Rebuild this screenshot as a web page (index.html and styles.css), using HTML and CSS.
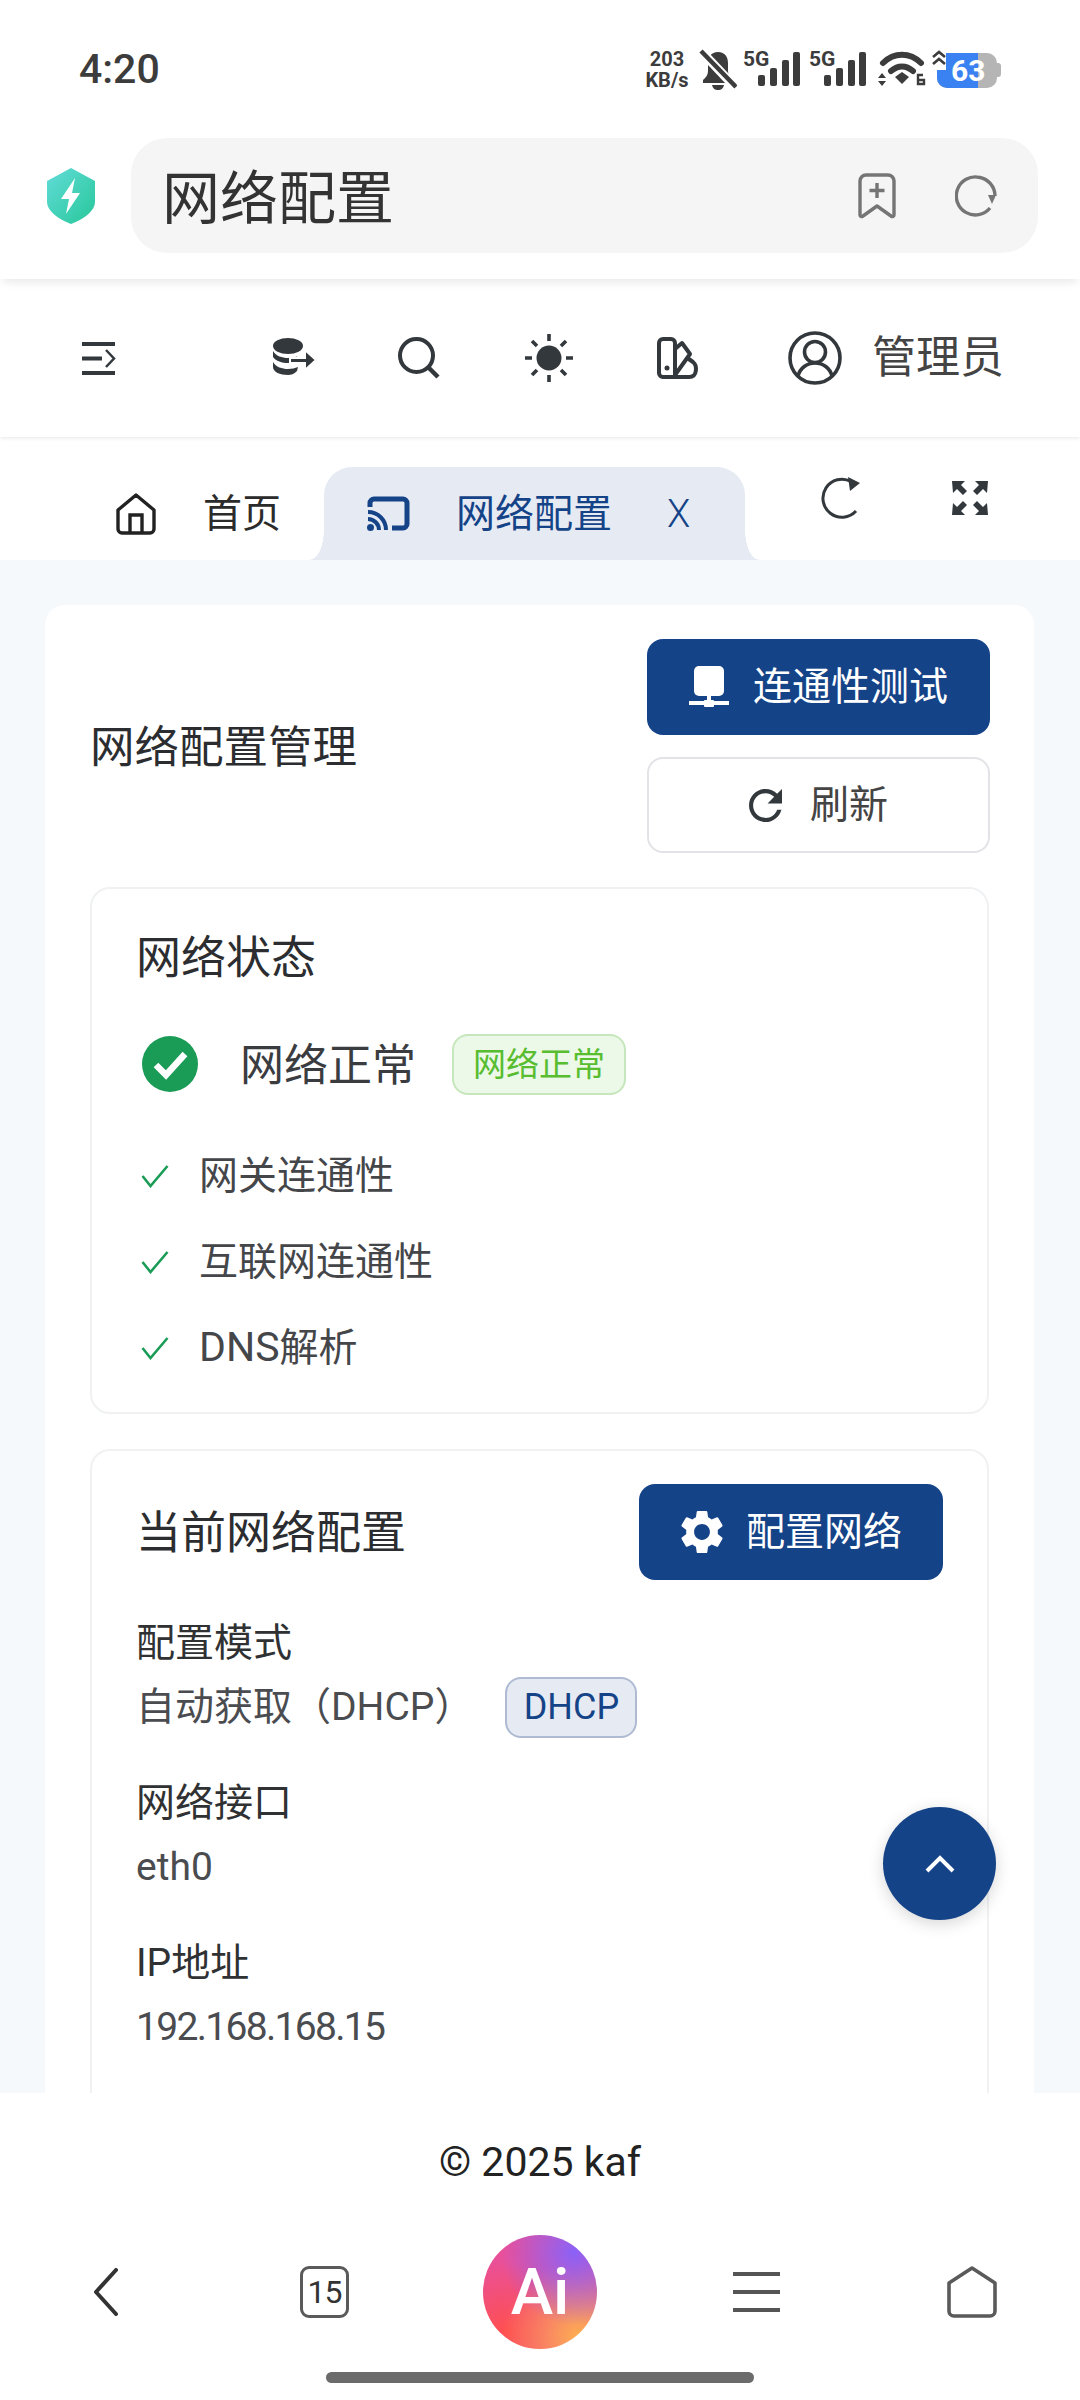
FILE: index.html
```html
<!DOCTYPE html>
<html lang="zh-CN">
<head>
    <meta charset="UTF-8">
    <title>网络配置</title>
    <link rel="stylesheet" href="styles.css">
</head>
<body>
<div class="screen">

    <!-- Phone status bar -->
    <div class="statusbar">
        <span class="clock">4:20</span>
        <div class="status-icons">
            <div class="speed"><span>203</span><span>KB/s</span></div>
            <svg class="ic-bell" viewBox="0 0 38 42"><path fill="#3c3c3c" d="M19 3c-7 0-10 5-10 11v8c0 4-2 6-5 9v3h30v-3c-3-3-5-5-5-9v-8c0-6-3-11-10-11z"/><path fill="#3c3c3c" d="M13 36h12c-1 4-3 5-6 5s-5-1-6-5z"/><path d="M1 1l36 38" stroke="#fff" stroke-width="9"/><path d="M2 2l35 36" stroke="#3c3c3c" stroke-width="4.5"/></svg>
            <div class="signal">
                <span class="sig-label">5G</span>
                <svg viewBox="0 0 42 34"><rect x="0" y="23" width="7" height="11" rx="2"/><rect x="12" y="16" width="7" height="18" rx="2"/><rect x="24" y="8" width="7" height="26" rx="2"/><rect x="35" y="0" width="7" height="34" rx="2"/></svg>
            </div>
            <div class="signal signal-next">
                <span class="sig-label">5G</span>
                <svg viewBox="0 0 42 34"><rect x="0" y="23" width="7" height="11" rx="2"/><rect x="12" y="16" width="7" height="18" rx="2"/><rect x="24" y="8" width="7" height="26" rx="2"/><rect x="35" y="0" width="7" height="34" rx="2"/></svg>
            </div>
            <svg class="ic-wifi" viewBox="0 0 48 36"><path d="M5 12C16 1 32 1 43 12" fill="none" stroke="#3c3c3c" stroke-width="6" stroke-linecap="round"/><path d="M13 20c7-6 15-6 22 0" fill="none" stroke="#3c3c3c" stroke-width="6" stroke-linecap="round"/><path d="M17 26l7-5 7 5-7 7z" fill="#3c3c3c"/><path d="M0 27l4-5 4 5zM0 30l4 5 4-5z" fill="#3c3c3c"/><path d="M45 24h-5v9h6v-4h-6" fill="none" stroke="#3c3c3c" stroke-width="2.4"/></svg>
            <div class="battery">
                <svg class="ic-charge" viewBox="0 0 14 20"><path d="M1 7l6-5 6 5M1 14l6-5 6 5" fill="none" stroke="#3c3c3c" stroke-width="2.6"/></svg>
                <div class="batt-body"><div class="batt-fill"></div><span class="batt-num">63</span></div>
                <div class="batt-tip"></div>
            </div>
        </div>
    </div>

    <!-- Browser address bar -->
    <div class="addressbar">
        <svg class="ic-shield" viewBox="0 0 48 56">
            <defs><linearGradient id="shieldGrad" x1="0" y1="0" x2="1" y2="1"><stop offset="0" stop-color="#62dcd8"/><stop offset="1" stop-color="#27c79a"/></linearGradient></defs>
            <path d="M24 0l24 13v21c0 9-11 17-24 22C11 51 0 43 0 34V13z" fill="url(#shieldGrad)"/>
            <path d="M28 10L14 31h8l-3 15 14-21h-8z" fill="#fff"/>
        </svg>
        <div class="urlbox">
            <span class="urltext">网络配置</span>
            <svg class="ic-bookmark" viewBox="0 0 40 46"><path d="M3 8a6 6 0 0 1 6-6h22a6 6 0 0 1 6 6v34c0 2-2 2-3 1l-14-10-14 10c-1 1-3 1-3-1z" fill="none" stroke="#757575" stroke-width="3.4" stroke-linejoin="round"/><path d="M20 10v15M12.500 17.500h15" stroke="#757575" stroke-width="3.4"/></svg>
            <svg class="ic-reload" viewBox="0 0 42 42"><path d="M35 33A19 19 0 1 1 24 2.300 19 19 0 0 1 40 21" fill="none" stroke="#757575" stroke-width="3.4"/><path d="M33 20h8l-4 9z" fill="#757575"/></svg>
        </div>
    </div>

    <!-- App header -->
    <header class="topbar">
        <svg class="ic-menu" viewBox="0 0 35 35"><path d="M1 3h33M1 17.500h20M1 32h33" stroke="#33383d" stroke-width="4" fill="none"/><path d="M25 9l8 8.500-8 8.500" stroke="#33383d" stroke-width="2.500" fill="none"/></svg>
        <svg class="ic-db" viewBox="0 0 44 40"><ellipse cx="16" cy="8" rx="15" ry="8" fill="#33383d"/><path d="M1 13c3 5 9 7 15 7 3 0 6-.5 9-1.500v5c-3 1-6 1.500-9 1.500-6 0-12-2-15-6zM1 24c3 5 9 7 15 7 4 0 7-1 10-2l-1 4c-3 3-6 4-9 4-8 0-15-3-15-8z" fill="#33383d"/><path d="M18 20h15v-8l11 10-11 10v-7H18z" fill="#33383d" stroke="#fff" stroke-width="2"/></svg>
        <svg class="ic-search" viewBox="0 0 42 42"><circle cx="18.500" cy="18.500" r="16.500" fill="none" stroke="#33383d" stroke-width="4"/><path d="M30 30l10 10" stroke="#33383d" stroke-width="4.500"/></svg>
        <svg class="ic-sun" viewBox="0 0 48 48"><circle cx="24" cy="24" r="12.500" fill="#33383d"/><path d="M24 0v7M24 41v7M0 24h7M41 24h7M7 7l5 5M36 36l5 5M7 41l5-5M36 12l5-5" stroke="#33383d" stroke-width="3.600"/></svg>
        <svg class="ic-palette" viewBox="0 0 44 42"><path d="M3 6a4 4 0 0 1 4-4h8a4 4 0 0 1 4 4v34H7a4 4 0 0 1-4-4z" fill="none" stroke="#33383d" stroke-width="4"/><path d="M19 12l7-6 8 11-15 21" fill="none" stroke="#33383d" stroke-width="4" stroke-linejoin="round"/><path d="M30 20l7 5c4 3 5 15-4 15H14" fill="none" stroke="#33383d" stroke-width="4" stroke-linejoin="round"/><circle cx="11" cy="31" r="2.500" fill="#33383d"/></svg>
        <svg class="ic-user" viewBox="0 0 54 54"><circle cx="27" cy="27" r="25" fill="none" stroke="#33383d" stroke-width="3.600"/><circle cx="27" cy="21" r="10.500" fill="none" stroke="#33383d" stroke-width="3.600"/><path d="M10 45c2-8 9-13 17-13s15 5 17 13" fill="none" stroke="#33383d" stroke-width="3.600"/></svg>
        <span class="username">管理员</span>
    </header>

    <!-- Tabs -->
    <nav class="tabbar">
        <div class="tab">
            <svg class="ic-home" viewBox="0 0 40 42"><path d="M2 17L20 2l18 15v19a4 4 0 0 1-4 4H6a4 4 0 0 1-4-4z" fill="none" stroke="#222" stroke-width="3.400" stroke-linejoin="round"/><path d="M14 40V22h12v18" fill="none" stroke="#222" stroke-width="3.400"/></svg>
            <span class="tab-label">首页</span>
        </div>
        <div class="tab tab-active">
            <svg class="ic-cast" viewBox="0 0 43 35"><path d="M3 11V7a4 4 0 0 1 4-4h29a4 4 0 0 1 4 4v21a4 4 0 0 1-4 4H25" fill="none" stroke="#154388" stroke-width="5"/><path d="M1 16c10 0 18 8 18 18M1 23c6 0 11 5 11 11" fill="none" stroke="#154388" stroke-width="4"/><circle cx="3.500" cy="31.500" r="3.500" fill="#154388"/></svg>
            <span class="tab-label tab-label-active">网络配置</span>
            <span class="tab-close">X</span>
        </div>
        <svg class="ic-tabreload" viewBox="0 0 42 42"><path d="M35 34A19 19 0 1 1 30 4.500" fill="none" stroke="#33383d" stroke-width="3"/><path d="M27 0l12 6-10 8z" fill="#33383d"/></svg>
        <svg class="ic-fullscreen" viewBox="0 0 40 38"><path d="M2 2h13l-4 4 6 6-4 4-6-6-4 4zM38 2H25l4 4-6 6 4 4 6-6 4 4zM2 36h13l-4-4 6-6-4-4-6 6-4-4zM38 36H25l4-4-6-6 4-4 6 6 4-4z" fill="#33383d"/></svg>
    </nav>

    <!-- Page content -->
    <main class="content">
        <div class="page-card">
            <div class="page-head">
                <h1 class="page-title">网络配置管理</h1>
                <div class="page-actions">
                    <button class="btn btn-primary btn-wide">
                        <svg class="ic-wired" viewBox="0 0 40 42"><rect x="5" y="0" width="30" height="30" rx="5" fill="#fff"/><rect x="18" y="30" width="4" height="8" fill="#fff"/><rect x="0" y="35" width="40" height="4" fill="#fff"/><rect x="15" y="34" width="10" height="7" rx="1" fill="#fff"/></svg>
                        <span class="btn-text">连通性测试</span>
                    </button>
                    <button class="btn btn-plain btn-wide">
                        <svg class="ic-refresh" viewBox="4 4 16 16"><path fill="#33383d" d="M17.650 6.350C16.200 4.900 14.210 4 12 4c-4.420 0-7.990 3.580-7.990 8s3.570 8 7.990 8c3.730 0 6.840-2.550 7.730-6h-2.080c-.82 2.330-3.040 4-5.650 4-3.310 0-6-2.690-6-6s2.690-6 6-6c1.660 0 3.140.69 4.220 1.780L13 11h7V4l-2.350 2.350z"/></svg>
                        <span class="btn-text">刷新</span>
                    </button>
                </div>
            </div>

            <section class="panel panel-status">
                <h2 class="panel-title">网络状态</h2>
                <div class="status-row">
                    <svg class="ic-ok" viewBox="0 0 56 56"><circle cx="28" cy="28" r="28" fill="#1a9b56"/><path d="M14 29l10 10 19-21" fill="none" stroke="#fff" stroke-width="6.500"/></svg>
                    <span class="status-text">网络正常</span>
                    <span class="tag tag-green"><span class="tag-text">网络正常</span></span>
                </div>
                <ul class="check-list">
                    <li><svg class="ic-check" viewBox="0 0 28 24"><path d="M1.500 12l8 10L26.500 2" fill="none" stroke="#1a9b56" stroke-width="2.600"/></svg><span class="check-text">网关连通性</span></li>
                    <li><svg class="ic-check" viewBox="0 0 28 24"><path d="M1.500 12l8 10L26.500 2" fill="none" stroke="#1a9b56" stroke-width="2.600"/></svg><span class="check-text">互联网连通性</span></li>
                    <li><svg class="ic-check" viewBox="0 0 28 24"><path d="M1.500 12l8 10L26.500 2" fill="none" stroke="#1a9b56" stroke-width="2.600"/></svg><span class="check-text"><span class="latin dns">DNS</span>解析</span></li>
                </ul>
            </section>

            <section class="panel panel-config">
                <div class="panel-head">
                    <h2 class="panel-title">当前网络配置</h2>
                    <button class="btn btn-primary btn-config">
                        <svg class="ic-gear" viewBox="2 2 20 20"><path fill="#fff" d="M19.140 12.940c.04-.3.06-.61.06-.94 0-.32-.02-.64-.07-.94l2.030-1.580c.18-.14.23-.41.12-.61l-1.920-3.320c-.12-.22-.37-.29-.59-.22l-2.390.96c-.5-.38-1.030-.7-1.620-.94l-.36-2.540c-.04-.24-.24-.41-.48-.41h-3.840c-.24 0-.43.17-.47.41l-.36 2.540c-.59.24-1.130.57-1.620.94l-2.390-.96c-.22-.08-.47 0-.59.22L2.740 8.870c-.12.21-.08.47.12.61l2.030 1.580c-.05.3-.09.63-.09.94s.02.64.07.94l-2.030 1.580c-.18.14-.23.41-.12.61l1.920 3.320c.12.22.37.29.59.22l2.390-.96c.5.38 1.030.7 1.620.94l.36 2.540c.05.24.24.41.48.41h3.840c.24 0 .44-.17.47-.41l.36-2.540c.59-.24 1.130-.56 1.620-.94l2.390.96c.22.08.47 0 .59-.22l1.920-3.320c.12-.22.07-.47-.12-.61l-2.010-1.580zM12 15.600c-1.980 0-3.600-1.620-3.600-3.600s1.620-3.600 3.600-3.600 3.600 1.620 3.600 3.600-1.620 3.600-3.600 3.600z"/></svg>
                        <span class="btn-text">配置网络</span>
                    </button>
                </div>
                <div class="field">
                    <div class="field-label">配置模式</div>
                    <div class="field-value field-value-tag">
                        <span class="dhcp-text">自动获取（<span class="latin dhcp-latin">DHCP</span>）</span>
                        <span class="tag tag-blue latin">DHCP</span>
                    </div>
                </div>
                <div class="field">
                    <div class="field-label">网络接口</div>
                    <div class="field-value field-latin latin">eth0</div>
                </div>
                <div class="field">
                    <div class="field-label"><span class="latin">IP</span>地址</div>
                    <div class="field-value field-digits latin">192.168.168.15</div>
                </div>
            </section>
        </div>

        <button class="fab">
            <svg class="ic-up" viewBox="0 0 30 18"><path d="M2 16L15 3l13 13" fill="none" stroke="#fff" stroke-width="4"/></svg>
        </button>
    </main>

    <footer class="copyright"><span class="copyright-text">© 2025 kaf</span></footer>

    <!-- Browser bottom toolbar -->
    <div class="toolbar">
        <svg class="ic-back" viewBox="0 0 25 48"><path d="M23 2L3 24l20 22" fill="none" stroke="#333" stroke-width="4" stroke-linejoin="round" stroke-linecap="round"/></svg>
        <div class="tabcount"><span>15</span></div>
        <div class="ai-btn"><span>Ai</span></div>
        <svg class="ic-lines" viewBox="0 0 47 42"><path d="M0 3h47M0 21h47M0 39h47" stroke="#555" stroke-width="4"/></svg>
        <svg class="ic-homeoutline" viewBox="0 0 50 52"><path d="M25 2l23 15v28a5 5 0 0 1-5 5H7a5 5 0 0 1-5-5V17z" fill="none" stroke="#5a5a5a" stroke-width="3.600" stroke-linejoin="round"/></svg>
    </div>
    <div class="home-handle"></div>
</div>
</body>
</html>
```

FILE: styles.css
```css
/* Reset and base */
*, *::before, *::after {
    box-sizing: border-box;
    margin: 0;
    padding: 0;
}

html, body {
    width: 1080px;
    height: 2400px;
    background: #fff;
}

body {
    font-family: "Noto Sans CJK SC", "Noto Sans", sans-serif;
    color: #303133;
    overflow: hidden;
}

svg {
    display: block;
    flex: none;
}

.latin {
    font-family: Roboto, "Noto Sans CJK SC", sans-serif;
}

.screen {
    position: relative;
    width: 1080px;
    height: 2400px;
    display: flex;
    flex-direction: column;
}

/* Status bar */
.statusbar {
    height: 138px;
    padding: 45px 78px 0 79px;
    display: flex;
    justify-content: space-between;
    align-items: flex-start;
    color: #3c3c3c;
    font-family: Roboto, sans-serif;
}

.clock {
    font-size: 41px;
    font-weight: 500;
    line-height: 48px;
}

.status-icons {
    display: flex;
    align-items: flex-start;
    margin-top: 4px;
}

.speed {
    width: 48px;
    display: flex;
    flex-direction: column;
    align-items: center;
    font-size: 20px;
    font-weight: 700;
    line-height: 21px;
}

.ic-bell {
    width: 38px;
    height: 42px;
    margin-left: 8px;
}

.signal {
    position: relative;
    width: 57px;
    height: 40px;
    margin-left: 6px;
}

.signal-next {
    margin-left: 9px;
}

.signal svg {
    position: absolute;
    right: 0;
    top: 3px;
    width: 42px;
    height: 34px;
    fill: #3c3c3c;
}

.sig-label {
    position: absolute;
    left: 0;
    top: 0;
    font-size: 21px;
    font-weight: 700;
    line-height: 20px;
}

.ic-wifi {
    width: 48px;
    height: 36px;
    margin: 2px 0 0 12px;
}

.battery {
    position: relative;
    width: 70px;
    height: 36px;
    margin: 3px 0 0 6px;
    display: flex;
    align-items: center;
}

.ic-charge {
    position: absolute;
    left: 0;
    top: -2px;
    width: 14px;
    height: 20px;
    background: #fff;
    z-index: 1;
}

.batt-body {
    position: relative;
    margin-left: 5px;
    width: 60px;
    height: 35px;
    border-radius: 10px;
    background: #b5b5b5;
    overflow: hidden;
}

.batt-fill {
    width: 41px;
    height: 100%;
    background: #3a82f2;
}

.batt-num {
    position: absolute;
    left: 14px;
    top: 0;
    color: #fff;
    font-size: 30px;
    font-weight: 700;
    line-height: 35px;
}

.batt-tip {
    width: 4px;
    height: 14px;
    border-radius: 0 3px 3px 0;
    background: #b5b5b5;
}

/* Address bar */
.addressbar {
    height: 141px;
    padding-left: 47px;
    display: flex;
    gap: 36px;
    align-items: flex-start;
    background: #fff;
    box-shadow: 0 7px 8px -3px rgba(0, 0, 0, 0.08);
    position: relative;
    z-index: 2;
}

.ic-shield {
    width: 48px;
    height: 56px;
    margin-top: 30px;
}

.urlbox {
    width: 907px;
    height: 115px;
    padding: 0 41px 0 31px;
    display: flex;
    align-items: center;
    background: #f5f5f5;
    border-radius: 36px;
}

.urltext {
    font-size: 58px;
    color: #333;
    flex: 1;
    padding-bottom: 4px;
}

.ic-bookmark {
    width: 40px;
    height: 46px;
}

.ic-reload {
    width: 42px;
    height: 42px;
    margin-left: 58px;
}

/* Top bar */
.topbar {
    height: 158px;
    padding: 0 0 0 81px;
    display: flex;
    align-items: center;
    background: #fff;
    box-shadow: 0 1px 4px rgba(0, 0, 0, 0.1);
    position: relative;
    z-index: 1;
}

.ic-menu { width: 35px; height: 35px; }
.ic-db { width: 44px; height: 40px; margin-left: 156px; }
.ic-search { width: 42px; height: 42px; margin-left: 82px; }
.ic-sun { width: 48px; height: 48px; margin-left: 85px; }
.ic-palette { width: 44px; height: 42px; margin-left: 83px; }
.ic-user { width: 54px; height: 54px; margin-left: 88px; }

.username {
    margin-left: 30px;
    font-size: 44px;
    color: #444;
    white-space: nowrap;
    padding-bottom: 8px;
}

/* Tabs */
.tabbar {
    height: 123px;
    padding: 30px 0 0 116px;
    display: flex;
    align-items: flex-start;
    background: #fff;
    box-shadow: 0 2px 6px rgba(0, 0, 0, 0.05);
    position: relative;
}

.tab {
    height: 93px;
    display: flex;
    align-items: center;
    font-size: 39px;
    color: #2b2b2b;
}

.tab-label {
    margin-left: 47px;
    padding-bottom: 8px;
}

.ic-home { width: 40px; height: 42px; }

.tab-active {
    position: relative;
    width: 421px;
    margin-left: 43px;
    padding-left: 43px;
    background: #e6ebf3;
    border-radius: 28px 28px 0 0;
    color: #154388;
}

.tab-active::before,
.tab-active::after {
    content: '';
    position: absolute;
    bottom: 0;
    width: 14px;
    height: 30px;
}

.tab-active::before {
    left: -14px;
    background: radial-gradient(ellipse 14px 30px at 0 0, transparent 97%, #e6ebf3 100%);
}

.tab-active::after {
    right: -14px;
    background: radial-gradient(ellipse 14px 30px at 100% 0, transparent 97%, #e6ebf3 100%);
}

.ic-cast { width: 43px; height: 35px; }

.tab-label-active {
    margin-left: 46px;
}

.tab-close {
    margin-left: 55px;
    font-family: Roboto, sans-serif;
    font-size: 38px;
    font-weight: 300;
}

.ic-tabreload {
    width: 42px;
    height: 42px;
    margin: 10px 0 0 76px;
}

.ic-fullscreen {
    width: 40px;
    height: 38px;
    margin: 12px 0 0 87px;
}

/* Page content */
.content {
    position: relative;
    flex: 1;
    min-height: 0;
    padding: 45px 46px 0 45px;
    background: #f5f9fc;
    overflow: hidden;
}

.page-card {
    background: #fff;
    border-radius: 20px;
    padding: 34px 44px 60px 45px;
    min-height: 1600px;
}

.page-head {
    display: flex;
    justify-content: space-between;
    align-items: center;
    margin-bottom: 34px;
}

.page-title {
    font-size: 44.5px;
    font-weight: 400;
    color: #2b2d30;
    padding-bottom: 6px;
}

.page-actions {
    display: flex;
    flex-direction: column;
    gap: 22px;
}

/* Buttons */
.btn {
    display: inline-flex;
    align-items: center;
    justify-content: center;
    font-family: inherit;
    font-size: 39px;
    border-radius: 16px;
    border: none;
}

.btn-text {
    padding-bottom: 9px;
}

.btn-primary {
    background: #154388;
    color: #fff;
}

.btn-plain {
    background: #fff;
    color: #444;
    border: 2px solid #e2e3e6;
}

.btn-wide {
    width: 343px;
    height: 96px;
}

.btn-primary.btn-wide { gap: 24px; }
.btn-plain.btn-wide { gap: 28px; }

.ic-wired { width: 40px; height: 42px; }
.ic-refresh { width: 33px; height: 33px; }
.ic-gear { width: 44px; height: 44px; }

.btn-config {
    width: 304px;
    height: 96px;
    gap: 22px;
}

/* Panels */
.panel {
    border: 2px solid #f0f1f3;
    border-radius: 20px;
    padding: 0 44px;
    margin: 0 1px 35px 0;
}

.panel-title {
    font-size: 45px;
    font-weight: 400;
    color: #2b2d30;
    line-height: 60px;
    padding-bottom: 4px;
}

.panel-status {
    height: 527px;
    padding-top: 36px;
}

.status-row {
    display: flex;
    align-items: center;
    margin-top: 41px;
    padding-left: 6px;
}

.ic-ok { width: 56px; height: 56px; }

.status-text {
    margin-left: 42px;
    font-size: 44px;
    color: #3a3c3f;
    padding-bottom: 4px;
}

.tag {
    display: inline-flex;
    align-items: center;
    justify-content: center;
    border-radius: 16px;
    border: 2px solid;
}

.tag-text {
    padding-bottom: 4px;
}

.tag-green {
    width: 174px;
    height: 61px;
    margin-left: 36px;
    font-size: 33px;
    background: #ecf8e8;
    border-color: #c6e7bb;
    color: #58bd2f;
}

.check-list {
    list-style: none;
    margin-top: 35px;
    padding-left: 5px;
}

.check-list li {
    display: flex;
    align-items: center;
    height: 86px;
    font-size: 39px;
    color: #44464a;
}

.check-text {
    padding-bottom: 8px;
}

.dns {
    font-size: 41px;
}

.ic-check {
    width: 28px;
    height: 24px;
    margin-right: 30px;
}

.panel-config {
    padding-top: 33px;
    padding-right: 44px;
    padding-bottom: 120px;
}

.panel-head {
    display: flex;
    justify-content: space-between;
    align-items: center;
    margin-bottom: 29px;
}

.field {
    margin-bottom: 24px;
}

.field-label {
    font-size: 39px;
    line-height: 60px;
    color: #303133;
}

.field-value {
    font-size: 39px;
    line-height: 66px;
    color: #4a4c50;
}

.field-latin {
    padding-top: 5px;
    padding-bottom: 5px;
}

.field-digits {
    padding-top: 1px;
    letter-spacing: -1.7px;
}

.field-value-tag {
    display: flex;
    align-items: center;
    line-height: 68px;
    gap: 32px;
}

.dhcp-text {
    padding-bottom: 4px;
}

.tag-blue {
    width: 132px;
    height: 61px;
    font-size: 36px;
    background: #e6ebf3;
    border-color: #aebbd2;
    color: #154388;
}

/* Scroll-to-top button */
.fab {
    position: absolute;
    left: 883px;
    top: 1247px;
    width: 113px;
    height: 113px;
    border: none;
    border-radius: 50%;
    background: #154388;
    box-shadow: 0 4px 16px rgba(0, 0, 0, 0.16);
    display: flex;
    align-items: center;
    justify-content: center;
}

.ic-up { width: 30px; height: 18px; }

/* Footer */
.copyright {
    height: 142px;
    display: flex;
    align-items: center;
    justify-content: center;
    font-family: Roboto, sans-serif;
    font-size: 41px;
    color: #222;
    background: #fff;
}

.copyright-text {
    padding-bottom: 4px;
}

/* Bottom toolbar */
.toolbar {
    height: 114px;
    padding-left: 93px;
    display: flex;
    align-items: center;
    background: #fff;
}

.ic-back { width: 25px; height: 48px; }

.tabcount {
    width: 49px;
    height: 52px;
    margin-left: 182px;
    border: 3.5px solid #5a5a5a;
    border-radius: 9px;
    display: flex;
    align-items: center;
    justify-content: center;
    font-family: Roboto, sans-serif;
    font-size: 32px;
    letter-spacing: -1px;
    color: #333;
}

.ai-btn {
    width: 114px;
    height: 114px;
    margin-left: 134px;
    border-radius: 50%;
    background: radial-gradient(circle at 80% 15%, #8b62f7 0, rgba(139, 98, 247, 0) 55%),
                radial-gradient(circle at 85% 90%, #ffb04d 0, rgba(255, 176, 77, 0) 55%),
                radial-gradient(circle at 20% 85%, #ff4f50 0, rgba(255, 79, 80, 0) 55%),
                #e9509a;
    display: flex;
    align-items: center;
    justify-content: center;
    color: #fff;
    font-family: Roboto, sans-serif;
    font-weight: 500;
    font-size: 64px;
}

.ic-lines { width: 47px; height: 42px; margin-left: 136px; }
.ic-homeoutline { width: 50px; height: 52px; margin-left: 167px; }

.home-handle {
    width: 428px;
    height: 11px;
    margin: 23px auto 17px;
    border-radius: 6px;
    background: #6b6b6b;
}
```
